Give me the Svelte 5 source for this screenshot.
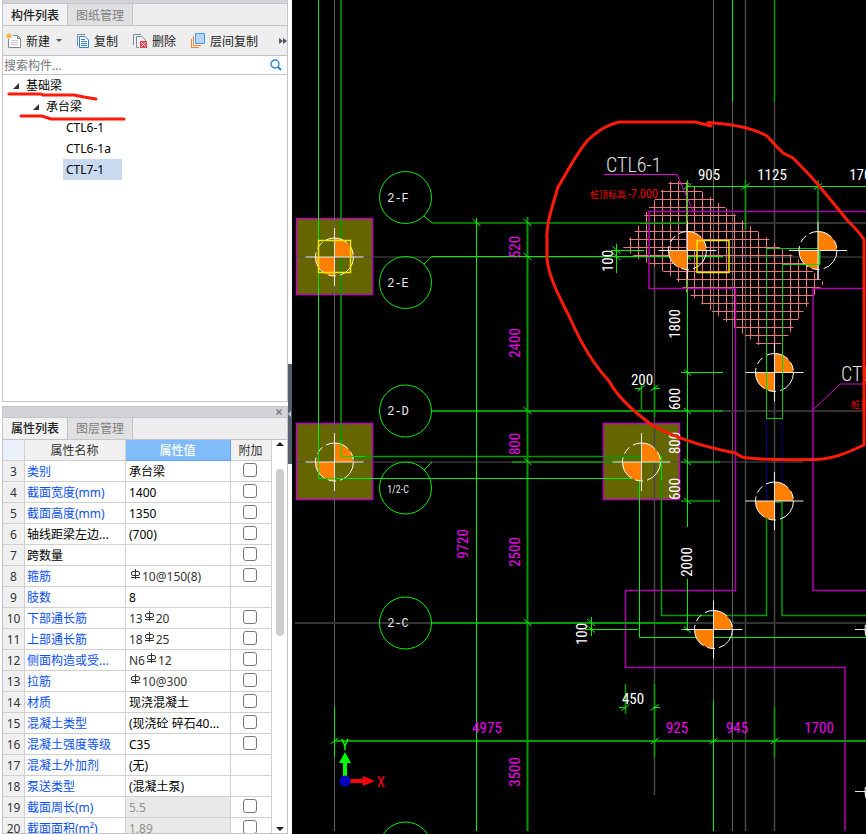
<script>
  let search = "";
  let selectedMember = "CTL7-1";
  let members = ["CTL6-1", "CTL6-1a", "CTL7-1"];

  // kind "plain" has a black name, "locked" a read only value
  let properties = [
    { no: 3, name: "类别", value: "承台梁", check: true },
    { no: 4, name: "截面宽度(mm)", value: "1400", check: true },
    { no: 5, name: "截面高度(mm)", value: "1350", check: true },
    { no: 6, name: "轴线距梁左边...", value: "(700)", check: true, kind: "plain" },
    { no: 7, name: "跨数量", value: "", check: true, kind: "plain" },
    { no: 8, name: "箍筋", pre: "", value: "10@150(8)", bar: true, check: true },
    { no: 9, name: "肢数", value: "8", check: false },
    { no: 10, name: "下部通长筋", pre: "13", value: "20", bar: true, check: true },
    { no: 11, name: "上部通长筋", pre: "18", value: "25", bar: true, check: true },
    { no: 12, name: "侧面构造或受...", pre: "N6", value: "12", bar: true, check: true },
    { no: 13, name: "拉筋", pre: "", value: "10@300", bar: true, check: true },
    { no: 14, name: "材质", value: "现浇混凝土", check: true },
    { no: 15, name: "混凝土类型", value: "(现浇砼 碎石40...", check: true },
    { no: 16, name: "混凝土强度等级", value: "C35", check: true },
    { no: 17, name: "混凝土外加剂", value: "(无)", check: false },
    { no: 18, name: "泵送类型", value: "(混凝土泵)", check: false },
    { no: 19, name: "截面周长(m)", value: "5.5", check: true, kind: "locked" },
    { no: 20, name: "截面面积(m²)", value: "1.89", check: true, kind: "locked" },
  ];

  let caps = [
    [296.5, 218.5],
    [296.5, 423.5],
    [603.5, 423.5],
  ];

  let piles = [
    [334.5, 257],
    [334.5, 462],
    [641.5, 462],
    [687.5, 250.5],
    [818, 250.5],
    [774.5, 372.5],
    [774.5, 501],
    [713.5, 629.5],
    [884, 629.5],
    [884, 791.5],
  ];

  let bubbles = [
    { y: 197.5, label: "2-F" },
    { y: 282.5, label: "2-E" },
    { y: 411, label: "2-D" },
    { y: 488, label: "1/2-C", small: true },
    { y: 623, label: "2-C" },
    { y: 848, label: "" },
  ];

  let ticks = [
    [476.5, 223], [527.5, 223], [527.5, 257], [527.5, 411], [527.5, 462], [527.5, 623],
    [616.5, 250.5], [616.5, 257], [591, 623], [591, 629.5],
  ];
  let slashes = [
    [334.5, 741], [654.5, 741], [713.5, 741], [774.5, 741],
    [687.5, 186.5], [745.5, 186.5], [818, 186.5],
    [641.5, 388], [654.5, 388], [625.5, 707.5], [654.5, 707.5],
  ];
  let beamTicks = [257, 372.5, 411, 462, 501, 629.5];

  let dims = [
    { x: 709, y: 175, t: "905" },
    { x: 772, y: 175, t: "1125" },
    { x: 864, y: 175, t: "1700" },
    { x: 642, y: 380, t: "200" },
    { x: 633, y: 699, t: "450" },
    { x: 608, y: 261, t: "100", up: true },
    { x: 675, y: 324, t: "1800", up: true },
    { x: 675, y: 399, t: "600", up: true },
    { x: 675, y: 443, t: "800", up: true },
    { x: 675, y: 489, t: "600", up: true },
    { x: 687, y: 562, t: "2000", up: true },
    { x: 582, y: 634, t: "100", up: true },
    { x: 487, y: 728, t: "4975", axis: true },
    { x: 677, y: 728, t: "925", axis: true },
    { x: 737, y: 728, t: "945", axis: true },
    { x: 819, y: 728, t: "1700", axis: true },
    { x: 515, y: 247, t: "520", up: true, axis: true },
    { x: 515, y: 343, t: "2400", up: true, axis: true },
    { x: 515, y: 444, t: "800", up: true, axis: true },
    { x: 515, y: 552, t: "2500", up: true, axis: true },
    { x: 463, y: 544, t: "9720", up: true, axis: true },
    { x: 515, y: 772, t: "3500", up: true, axis: true },
  ];
</script>

<div class="app">
  <aside>
    <section class="panel members">
      <div class="grip"></div>
      <div class="tabs">
        <button class="tab active">构件列表</button>
        <button class="tab">图纸管理</button>
      </div>
      <div class="toolbar">
        <button>
          <svg width="16" height="16" viewBox="0 0 16 16" fill="none">
            <path d="M7 2.500H11.500L14.500 5.500V14.500H2.500V6" fill="#fff" stroke="#7f8c98" />
            <path d="M11.500 2.500V5.500H14.500" stroke="#7f8c98" />
            <path d="M5 7.500H12M5 9.500H12M5 11.500H12" stroke="#ccc" />
            <path d="M3 0V6M0 3H6M1 1L5 5M5 1L1 5" stroke="#f5a623" />
          </svg>
          <span>新建</span>
          <i class="caret"></i>
        </button>
        <button>
          <svg width="14" height="16" viewBox="0 0 14 16" fill="none">
            <path d="M1.500 13V1.500H9" stroke="#7f8c98" />
            <path d="M3.500 3.500H9L12.500 7V14.500H3.500Z" fill="#fff" stroke="#2f7fd8" />
            <path d="M5 6.500H9M5 8.500H11M5 10.500H11M5 12.500H11" stroke="#2f7fd8" />
          </svg>
          <span>复制</span>
        </button>
        <button>
          <svg width="16" height="16" viewBox="0 0 16 16" fill="none">
            <path d="M1.500 12V1.500H9" stroke="#7f8c98" />
            <path d="M7 14.500H4.500V3.500H10L13.500 7V8" stroke="#7f8c98" />
            <path d="M8 8H15V15H8Z" fill="#e6484d" />
            <path d="M9.500 9.500L13.500 13.500M13.500 9.500L9.500 13.500" stroke="#fff" />
          </svg>
          <span>删除</span>
        </button>
        <button>
          <svg width="16" height="16" viewBox="0 0 16 16" fill="none">
            <path d="M1.500 6V14.500H9" stroke="#f5822a" />
            <path d="M3.500 3V12.500H11" stroke="#f5822a" />
            <path d="M5.500 0.500H14.500V10.500H5.500Z" fill="#b5d6ff" stroke="#4d94e8" />
          </svg>
          <span>层间复制</span>
        </button>
        <button class="more" aria-label="more">
          <svg width="8" height="8" viewBox="0 0 8 8"><path d="M0 1L4 4L0 7ZM4 1L8 4L4 7Z" fill="#555" /></svg>
        </button>
      </div>
      <div class="search">
        <input type="text" aria-label="搜索构件" placeholder="搜索构件..." bind:value={search} />
        <svg width="12" height="12" viewBox="0 0 12 12" fill="none" stroke="#1c86c8">
          <circle cx="5" cy="5" r="4" stroke-width="1.300" />
          <path d="M8 8L11 11" stroke-width="2" />
        </svg>
      </div>
      <div class="tree">
        <button class="node"><i class="fold"></i>基础梁</button>
        <button class="node level2"><i class="fold"></i>承台梁</button>
        {#each members as member}
          <button
            class="leaf"
            class:selected={member === selectedMember}
            on:click={() => (selectedMember = member)}>{member}</button
          >
        {/each}
        <svg class="marks" width="130" height="60" viewBox="0 0 130 60">
          <path d="M6 19H38L40 20H71L81 22L93 24" />
          <path d="M18 41H39L48 44H121" />
        </svg>
      </div>
    </section>

    <section class="panel props">
      <div class="grip tall">
        <button aria-label="close">
          <svg width="6" height="6" viewBox="0 0 6 6"><path d="M0.500 0.500L5.500 5.500M5.500 0.500L0.500 5.500" stroke="#777" stroke-width="1.300" /></svg>
        </button>
      </div>
      <div class="tabs">
        <button class="tab active">属性列表</button>
        <button class="tab">图层管理</button>
      </div>
      <div class="grid">
        <table>
          <colgroup>
            <col class="c-no" /><col class="c-name" /><col class="c-value" /><col />
          </colgroup>
          <thead>
            <tr>
              <th class="corner"></th>
              <th>属性名称</th>
              <th class="current">属性值</th>
              <th>附加</th>
            </tr>
          </thead>
          <tbody>
            {#each properties as p}
              <tr>
                <td class="no">{p.no}</td>
                <td class="name" class:plain={p.kind === "plain"}>{p.name}</td>
                <td class="value" class:rebar={p.bar} class:locked={p.kind === "locked"}>
                  {#if p.bar}
                    {p.pre}<svg width="11" height="11" viewBox="0 0 11 11" fill="none" stroke="#333">
                      <rect x="1.500" y="2.500" width="8" height="4" rx="1.500" />
                      <path d="M5.500 0V10M1 8.500H10" />
                    </svg>{p.value}
                  {:else}
                    {p.value}
                  {/if}
                </td>
                <td class="extra">
                  {#if p.check}
                    <input type="checkbox" aria-label={p.name} />
                  {/if}
                </td>
              </tr>
            {/each}
          </tbody>
        </table>
        <div class="scroll">
          <i class="up"></i>
          <div class="thumb"></div>
          <i class="down"></i>
        </div>
      </div>
    </section>
  </aside>

  <div class="splitter"><div class="handle"><i></i></div></div>

  <main>
    <svg class="cad" viewBox="292 0 574 834" preserveAspectRatio="xMinYMin slice">
      <defs>
        <pattern id="mesh" x="662" y="199" width="8" height="8" patternUnits="userSpaceOnUse">
          <path d="M0.500 0V8M0 0.500H8" stroke="#f07878" fill="none" />
        </pattern>
        <g id="pile">
          <path d="M0 0V-19A19 19 0 0 1 19 0ZM0 0V19A19 19 0 0 1 -19 0Z" fill="#ff8000" />
          <circle r="19" fill="none" stroke="#fff" stroke-dasharray="24 4 8 4" />
          <path d="M-29 0H29M0 -29V29" stroke="#e8e8e8" />
        </g>
      </defs>

      {#each caps as [x, y]}
        <rect {x} {y} width="76" height="76" fill="#666600" stroke="#c000c0" stroke-width="1.500" />
      {/each}

      <!-- grid axes -->
      <g stroke="#606060" fill="none">
        <path d="M334.500 0V831M713.500 0V700M732.500 102V831" />
        <path d="M654.500 262V795M745.500 0V831M774.500 102V831" stroke="#484848" stroke-width="1.500" />
        <path d="M296 257H866M296 462H803" stroke="#505050" />
        <path d="M295 623H866M688 223H866M720 411H866" stroke="#333" stroke-width="2" />
        <path d="M818 250V279" stroke="#888" stroke-width="2" />
      </g>

      <path d="M671 181H685L700 190L722 205L746 223L766 237L782 249L806 264L824 283L816 293L803 312L788 336L780 345H758L732 326L706 307L686 292L676 279L652 265L638 259L623 248L637 228L650 206L662 190Z" fill="url(#mesh)" />

      <!-- pile cap outlines -->
      <g stroke="#b000b0" fill="none" stroke-width="1.500">
        <path d="M866 211.500H649V288.500H735.500V590.500H625.500V667.500H845V831" />
        <path d="M866 288.500H813V590.500H866" />
        <path d="M813 410L840 384H866M604 174.500H677L693 211" stroke-width="1" stroke="#e000e0" />
      </g>

      <!-- beams -->
      <g stroke="#009c00" fill="none" stroke-width="1.500">
        <path d="M341 0V456.500H661.500V615.500H766.500V502H782V615.500H866" />
        <path d="M432 411H723M432 623H688M334 741H866" stroke-width="2" />
        <path d="M527.500 217V831" stroke-width="2" />
        <path d="M774.500 0V102M745.500 180V230M818 180V250" />
        <path d="M641.500 384V412M654.500 384V417M654.500 684V757M774.500 707V757M625.500 684V714" />
        <path d="M681 501H720M512 462H669M681 462H720M432 223H688" />
      </g>
      <path d="M766.500 419V502M782 419V502" stroke="#000080" />
      <g stroke="#00f000" fill="none">
        <path d="M318.500 0V478.500H639.500V637.500H866" />
        <path d="M766.500 248.500H820V264.500H782.500V418.500H766.500Z" stroke="#10c810" />
        <path d="M476.500 218V831M732.500 0V102M713.500 700V831M334.500 707V757" />
        <path d="M432 256.500H723M687 186.500H866M687.500 180V527M687.500 579V631" />
        <path d="M681 372.500H723M681 629.500H720M611 250.500H644M585 629.500H638" />
        <path d="M616.500 244V273M591.500 617V636M619 707.500H626M653 707.500H660M635 388.500H642M654 388.500H660" />
        <path d="M424 216L432 223M424 264L432 256.500M424 470L432 462" />
        {#each ticks as [x, y]}
          <path d="M{x - 4} {y - 4}L{x + 4} {y + 3}" />
        {/each}
        {#each slashes as [x, y]}
          <path d="M{x - 4} {y + 3}L{x + 4} {y - 3}" />
        {/each}
        {#each beamTicks as y}
          <path d="M684 {y - 3}L691 {y + 3}" />
        {/each}
        {#each bubbles as b}
          <circle cx="405.500" cy={b.y} r="26" />
        {/each}
      </g>

      {#each piles as [x, y]}
        <use href="#pile" {x} {y} />
      {/each}
      <path d="M318.500 228V286M318.500 440V478.500H350M661.500 456V480M766.500 350V395M782.500 350V395M819.500 250V264.500H800M341 440V456.500H365" stroke="#00e000" fill="none" />
      <path d="M318.500 240.500H350.500V272.500H318.500ZM697 240.500H729V272.500H697Z" stroke="#f0e800" fill="none" stroke-width="1.500" />

      {#each bubbles as b}
        <text class={b.small ? "axis-small" : "axis-name"} x="398" y={b.y + 1}>{b.label}</text>
      {/each}
      {#each dims as d}
        <text
          class="dim"
          class:axis={d.axis}
          transform={d.up ? `translate(${d.x} ${d.y}) rotate(-90)` : `translate(${d.x} ${d.y})`}
          >{d.t}</text
        >
      {/each}
      <text class="tag" x="606" y="172">CTL6-1</text>
      <text class="tag" x="841" y="381">CTL7-1</text>
      <text class="level" x="590" y="198">桩顶标高</text>
      <text class="level" x="851" y="408">桩顶标高</text>
      <text class="level num" x="628" y="198">-7.000</text>

      <!-- UCS icon -->
      <path d="M345 781V762" stroke="#00ff00" stroke-width="4" />
      <path d="M345 752L351 763H339Z" fill="#00ff00" />
      <path d="M345 781H364" stroke="#f00" stroke-width="4" />
      <path d="M375 781L363 776V786Z" fill="#f00" />
      <circle cx="345" cy="781" r="5.500" fill="#0000c0" />
      <text class="ucs y" x="345" y="745">Y</text>
      <text class="ucs x" x="381" y="782">X</text>

      <path
        class="cloud"
        d="M711 126L695 122H619C606 125 598 131 588 140C578 151 570 167 558 187C552 208 546 225 547 238V258C548 276 560 298 570 318C580 341 593 364 609 381C617 396 630 409 652 425C668 434 695 445 735 453L742 457C756 460 780 460 815 459.500C833 459 847 453 864 445V240Q862 235 848 221L820 187C811 176 801 166 793 158L783 153L777 147L767 136L761 133C748 127 730 124 708 122.500"
      />
    </svg>
  </main>
</div>

<style>
  :global(body) {
    margin: 0;
    background: #fff;
  }
  .app {
    display: flex;
    height: 100vh;
    overflow: hidden;
    font-family: "Noto Sans", "Noto Sans CJK SC", sans-serif;
    font-size: 12px;
    color: #000;
  }
  button {
    font: inherit;
    color: inherit;
    border: none;
    background: none;
    padding: 0;
    margin: 0;
  }
  svg {
    flex: none;
  }
  aside {
    flex: 0 0 286px;
    min-width: 0;
    display: flex;
    flex-direction: column;
    gap: 4px;
    padding-left: 2px;
  }
  .panel {
    box-sizing: border-box;
    border: 1px solid #c3c4c9;
    border-top: none;
    display: flex;
    flex-direction: column;
    min-height: 0;
  }
  .members {
    flex: 402;
  }
  .props {
    flex: 428;
    border-top: 1px solid #c3c4c9;
  }
  .grip {
    flex: none;
    height: 3px;
    background: #d3d4da;
    border-bottom: 1px solid #c3c4c9;
  }
  .grip.tall {
    height: 10px;
    display: flex;
    justify-content: flex-end;
    align-items: center;
    padding-right: 5px;
  }
  .grip button {
    display: flex;
  }
  .tabs {
    flex: none;
    display: flex;
    height: 21px;
    background: #eee;
    border-bottom: 1px solid #c3c4c9;
  }
  .tab {
    width: 65px;
    background: #e0e0e2;
    color: #808080;
    border-right: 1px solid #c3c4c9;
  }
  .tab.active {
    background: #f2f2f2;
    color: #222;
    font-weight: 500;
  }
  .toolbar {
    flex: none;
    display: flex;
    align-items: center;
    gap: 14px;
    height: 29px;
    padding-left: 3px;
    background: #eee;
    border-bottom: 1px solid #c3c4c9;
    color: #222;
  }
  .toolbar button {
    display: flex;
    align-items: center;
    gap: 4px;
    white-space: nowrap;
  }
  .toolbar .more {
    margin-left: auto;
  }
  .caret {
    border: 3px solid transparent;
    border-top-color: #555;
    border-bottom: none;
    margin-left: 2px;
  }
  .search {
    flex: none;
    display: flex;
    align-items: center;
    height: 18px;
    padding: 0 5px 0 1px;
    border-bottom: 1px solid #c3c4c9;
  }
  .search input {
    flex: 1;
    min-width: 0;
    border: none;
    outline: none;
    padding: 0;
    font: inherit;
    background: none;
  }
  .search input::placeholder {
    color: #777;
  }
  .tree {
    position: relative;
    flex: 1;
    display: flex;
    flex-direction: column;
    align-items: flex-start;
  }
  .node,
  .leaf {
    height: 21px;
    line-height: 21px;
  }
  .node {
    display: flex;
    align-items: center;
    gap: 7px;
    padding-left: 10px;
  }
  .level2 {
    padding-left: 30px;
  }
  .fold {
    border: 3px solid #333;
    border-top-color: transparent;
    border-left-color: transparent;
  }
  .leaf {
    margin-left: 60px;
    padding: 0 3px;
    min-width: 59px;
    text-align: left;
  }
  .leaf.selected {
    background: #c8d9f0;
  }
  .marks {
    position: absolute;
    left: 0;
    top: 0;
    fill: none;
    stroke: #ff1a0a;
    stroke-width: 3px;
    stroke-linecap: round;
    pointer-events: none;
  }

  .grid {
    flex: 1;
    min-height: 0;
    display: flex;
    overflow: hidden;
  }
  table {
    flex: 1;
    table-layout: fixed;
    border-collapse: separate;
    border-spacing: 0;
    align-self: flex-start;
  }
  .c-no {
    width: 22px;
  }
  .c-name {
    width: 101px;
  }
  .c-value {
    width: 105px;
  }
  th,
  td {
    box-sizing: border-box;
    height: 21px;
    padding: 2px 3px 0 2px;
    line-height: 16px;
    border-right: 1px solid #d0d0d0;
    border-bottom: 1px solid #d0d0d0;
    white-space: nowrap;
  }
  th {
    background: #f0f0f0;
    font-weight: 400;
    color: #333;
    text-align: center;
  }
  .corner {
    background: #eaf1fa;
  }
  .current {
    background: #80bbfa;
    border-color: #62a5ec;
    color: #fff;
    font-weight: 500;
  }
  .no {
    background: #f0f0f0;
    color: #333;
    padding: 2px 0 0;
    text-align: center;
  }
  .name {
    color: #0a50f0;
  }
  .name.plain {
    color: #000;
  }
  .value {
    padding-left: 3px;
  }
  .rebar {
    color: #333;
  }
  .rebar svg {
    margin: 0 1px;
    vertical-align: text-bottom;
    padding-bottom: 5px;
  }
  .locked {
    background: #e9e9e9;
    color: #909090;
  }
  .extra {
    padding: 2px 2px 0 0;
    text-align: center;
    line-height: 0;
    vertical-align: top;
  }
  .extra input {
    appearance: none;
    box-sizing: border-box;
    width: 14px;
    height: 14px;
    margin: 0;
    border: 1px solid #777;
    border-radius: 3px;
    background: #fff;
  }
  .scroll {
    flex: 0 0 15px;
    display: flex;
    flex-direction: column;
    align-items: center;
    padding: 2px 0;
  }
  .up,
  .down {
    border: 4px solid transparent;
  }
  .up {
    border-top: none;
    border-bottom-color: #222;
  }
  .down {
    border-bottom: none;
    border-top-color: #222;
    margin-top: auto;
  }
  .thumb {
    width: 8px;
    height: 43%;
    margin-top: 23px;
    border-radius: 4px;
    background: #cdcdcd;
  }

  .splitter {
    flex: 0 0 4px;
    display: flex;
    flex-direction: column;
  }
  .splitter::before {
    content: "";
    flex: 364;
  }
  .splitter::after {
    content: "";
    flex: 370;
  }
  .handle {
    flex: 100;
    display: flex;
    align-items: center;
    background: #56616d;
  }
  .handle i {
    border: 3px solid transparent;
    border-left: none;
    border-right-color: #c8ccd0;
  }
  main {
    flex: 1;
    min-width: 0;
    background: #000;
  }
  .cad {
    display: block;
    width: 100%;
    height: 100%;
  }
  .dim,
  .axis-name,
  .axis-small,
  .ucs {
    text-anchor: middle;
    dominant-baseline: central;
  }
  .dim,
  .tag,
  .axis-small,
  .num,
  .ucs {
    font-family: "Roboto Condensed", "Liberation Sans", sans-serif;
  }
  .dim {
    font-size: 15px;
    fill: #fff;
  }
  .dim.axis {
    fill: #f000f0;
  }
  .axis-name {
    font-family: "Liberation Mono", monospace;
    font-size: 12px;
    fill: #e8e8e8;
  }
  .axis-small {
    font-size: 10px;
    fill: #e8e8e8;
  }
  .tag {
    font-size: 20px;
    font-weight: 300;
    fill: #e0e0e0;
  }
  .level {
    font-family: "Noto Sans CJK SC", sans-serif;
    font-size: 9px;
    fill: #f00000;
  }
  .level.num {
    font-family: "Roboto Condensed", "Liberation Sans", sans-serif;
    font-size: 12px;
  }
  .ucs {
    font-size: 15px;
  }
  .ucs.x {
    fill: #f00;
  }
  .ucs.y {
    fill: #0f0;
  }
  .cloud {
    fill: none;
    stroke: #ff1a0a;
    stroke-width: 3px;
    stroke-linejoin: round;
    stroke-linecap: round;
  }
</style>
